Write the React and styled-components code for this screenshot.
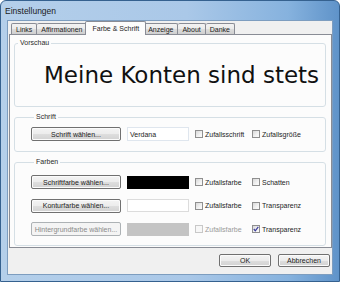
import React from 'react'
import styled, { createGlobalStyle } from 'styled-components'

const GlobalStyle = createGlobalStyle`
  html, body {
    margin: 0;
    padding: 0;
    background: #fff;
  }
  body {
    font-family: "Liberation Sans", Arial, sans-serif;
    color: #1c1c1c;
  }
`

const Window = styled.div`
  width: 340px;
  height: 282px;
  box-sizing: border-box;
  display: flex;
  flex-direction: column;
  border: 1px solid #35618f;
  border-radius: 6px 6px 0 0;
  background: linear-gradient(to right, #b4cfea 0%, #aac8e8 55%, #86b2de 85%, #5f93c9 100%);
  overflow: hidden;
`

const TitleBar = styled.div`
  height: 19px;
  display: flex;
  align-items: center;
  padding-left: 4px;
  font-size: 8.5px;
  color: #1b1b1b;
`

const Client = styled.div`
  flex: 1;
  margin: 0 6px 6px;
  border: 1px solid #7d9dbf;
  background: #f0f0f0;
  display: flex;
  flex-direction: column;
`

const TabStrip = styled.div`
  height: 13px;
  display: flex;
  align-items: flex-end;
  padding-left: 3px;
  position: relative;
  z-index: 1;
`

const Tab = styled.div`
  box-sizing: border-box;
  height: ${p => (p.$active ? '14px' : '11px')};
  margin: ${p => (p.$active ? '0 -2px -1px' : '0')};
  padding: 0 ${p => (p.$active ? '6px' : '4px')};
  display: flex;
  align-items: center;
  font-size: 7px;
  border: 1px solid #898c95;
  border-bottom: none;
  border-left-width: ${p => (p.$first || p.$active ? '1px' : '0')};
  border-radius: 2px 2px 0 0;
  background: ${p =>
    p.$active
      ? '#fcfcfc'
      : 'linear-gradient(#f2f2f2 0%, #ebebeb 50%, #dddddd 51%, #cfcfcf 100%)'};
  position: relative;
  z-index: ${p => (p.$active ? 2 : 1)};
`

const Panel = styled.div`
  height: 214px;
  box-sizing: border-box;
  margin-left: 1px;
  border: 1px solid #898c95;
  background: #fcfcfc;
  padding: 4px 5px 0 4px;
  display: flex;
  flex-direction: column;
  gap: 6px;
`

const Group = styled.fieldset`
  margin: 0;
  min-width: 0;
  border: 1px solid #d5dfe5;
  border-radius: 3px;
  padding: ${p => p.$pad || '0'};
`

const Legend = styled.legend`
  font-size: 7px;
  line-height: 8px;
  padding: 0 2px;
  margin-left: 3px;
  color: #2a2a2a;
`

const Preview = styled.div`
  height: 59px;
  box-sizing: border-box;
  display: flex;
  align-items: center;
  padding: 0 0 4px 29px;
  font-family: "DejaVu Sans", Verdana, sans-serif;
  font-size: 23px;
  color: #111;
  white-space: nowrap;
  overflow: hidden;
`

const Row = styled.div`
  display: grid;
  grid-template-columns: 90px 62px 51px auto;
  column-gap: 6px;
  align-items: center;
  height: 14px;
`

const Rows = styled.div`
  display: flex;
  flex-direction: column;
  gap: 9.5px;
`

const Button = styled.button`
  box-sizing: border-box;
  height: ${p => p.$h || '14px'};
  width: ${p => p.$w || 'auto'};
  padding: 0;
  font-family: inherit;
  font-size: 7px;
  color: ${p => (p.disabled ? '#8a8a8a' : '#1c1c1c')};
  border: 1px solid ${p => (p.disabled ? '#adb2b5' : '#707070')};
  border-radius: 2px;
  background: ${p =>
    p.disabled
      ? '#f4f4f4'
      : 'linear-gradient(#f4f4f4 0%, #ececec 50%, #dedede 51%, #d2d2d2 100%)'};
  box-shadow: inset 0 0 0 1px ${p => (p.disabled ? '#f4f4f4' : '#fbfbfb')};
`

const Field = styled.div`
  box-sizing: border-box;
  height: 14px;
  display: flex;
  align-items: center;
  padding-left: 2px;
  font-size: 7px;
  background: #fff;
  border: 1px solid #dfe6ee;
`

const Swatch = styled.div`
  box-sizing: border-box;
  height: 13px;
  background: ${p => p.$color};
  border: 1px solid ${p => p.$border || p.$color};
`

const Check = styled.label`
  display: flex;
  align-items: center;
  gap: 2px;
  font-size: 7px;
  white-space: nowrap;
  color: ${p => (p.$disabled ? '#9a9a9a' : '#1c1c1c')};
`

const Box = styled.span`
  box-sizing: border-box;
  width: 8px;
  height: 8px;
  display: flex;
  align-items: center;
  justify-content: center;
  border: 1px solid ${p => (p.$disabled ? '#c8c8c8' : '#8f8f8f')};
  background: ${p =>
    p.$disabled ? '#f7f7f7' : 'linear-gradient(135deg, #d8d8d8 0%, #f2f2f2 60%, #fbfbfb 100%)'};
`

const Footer = styled.div`
  flex: 1;
  display: flex;
  justify-content: flex-end;
  align-items: flex-start;
  gap: 7px;
  padding: 6px 2px 0 0;
`

const CheckBox = ({ label, checked, disabled }) => (
  <Check $disabled={disabled}>
    <Box $disabled={disabled}>
      {checked && (
        <svg width="6" height="6" viewBox="0 0 6 6">
          <polyline points="0.8,3 2.3,4.8 5.3,0.8" fill="none" stroke="#3b3b9a" strokeWidth="1.2" />
        </svg>
      )}
    </Box>
    {label}
  </Check>
)

const tabs = ['Links', 'Affirmationen', 'Farbe & Schrift', 'Anzeige', 'About', 'Danke']

const colorRows = [
  { button: 'Schriftfarbe wählen...', color: '#000', border: '#000', right: 'Schatten' },
  { button: 'Konturfarbe wählen...', color: '#fff', border: '#dcdcdc', right: 'Transparenz' },
  { button: 'Hintergrundfarbe wählen...', color: '#c4c4c4', border: '#c4c4c4', right: 'Transparenz', disabled: true, checked: true },
]

export default function App() {
  return (
    <>
      <GlobalStyle />
      <Window>
        <TitleBar>Einstellungen</TitleBar>
        <Client>
          <TabStrip>
            {tabs.map((t, i) => (
              <Tab key={t} $first={i === 0} $active={t === 'Farbe & Schrift'}>
                {t}
              </Tab>
            ))}
          </TabStrip>
          <Panel>
            <Group>
              <Legend>Vorschau</Legend>
              <Preview>Meine Konten sind stets</Preview>
            </Group>
            <Group $pad="6px 0 10px 16px">
              <Legend>Schrift</Legend>
              <Row>
                <Button>Schrift wählen...</Button>
                <Field>Verdana</Field>
                <CheckBox label="Zufallsschrift" />
                <CheckBox label="Zufallsgröße" />
              </Row>
            </Group>
            <Group $pad="9px 0 9px 16px">
              <Legend>Farben</Legend>
              <Rows>
                {colorRows.map(r => (
                  <Row key={r.button}>
                    <Button disabled={r.disabled}>{r.button}</Button>
                    <Swatch $color={r.color} $border={r.border} />
                    <CheckBox label="Zufallsfarbe" disabled={r.disabled} />
                    <CheckBox label={r.right} checked={r.checked} />
                  </Row>
                ))}
              </Rows>
            </Group>
          </Panel>
          <Footer>
            <Button $w="52px" $h="13px">OK</Button>
            <Button $w="52px" $h="13px">Abbrechen</Button>
          </Footer>
        </Client>
      </Window>
    </>
  )
}
